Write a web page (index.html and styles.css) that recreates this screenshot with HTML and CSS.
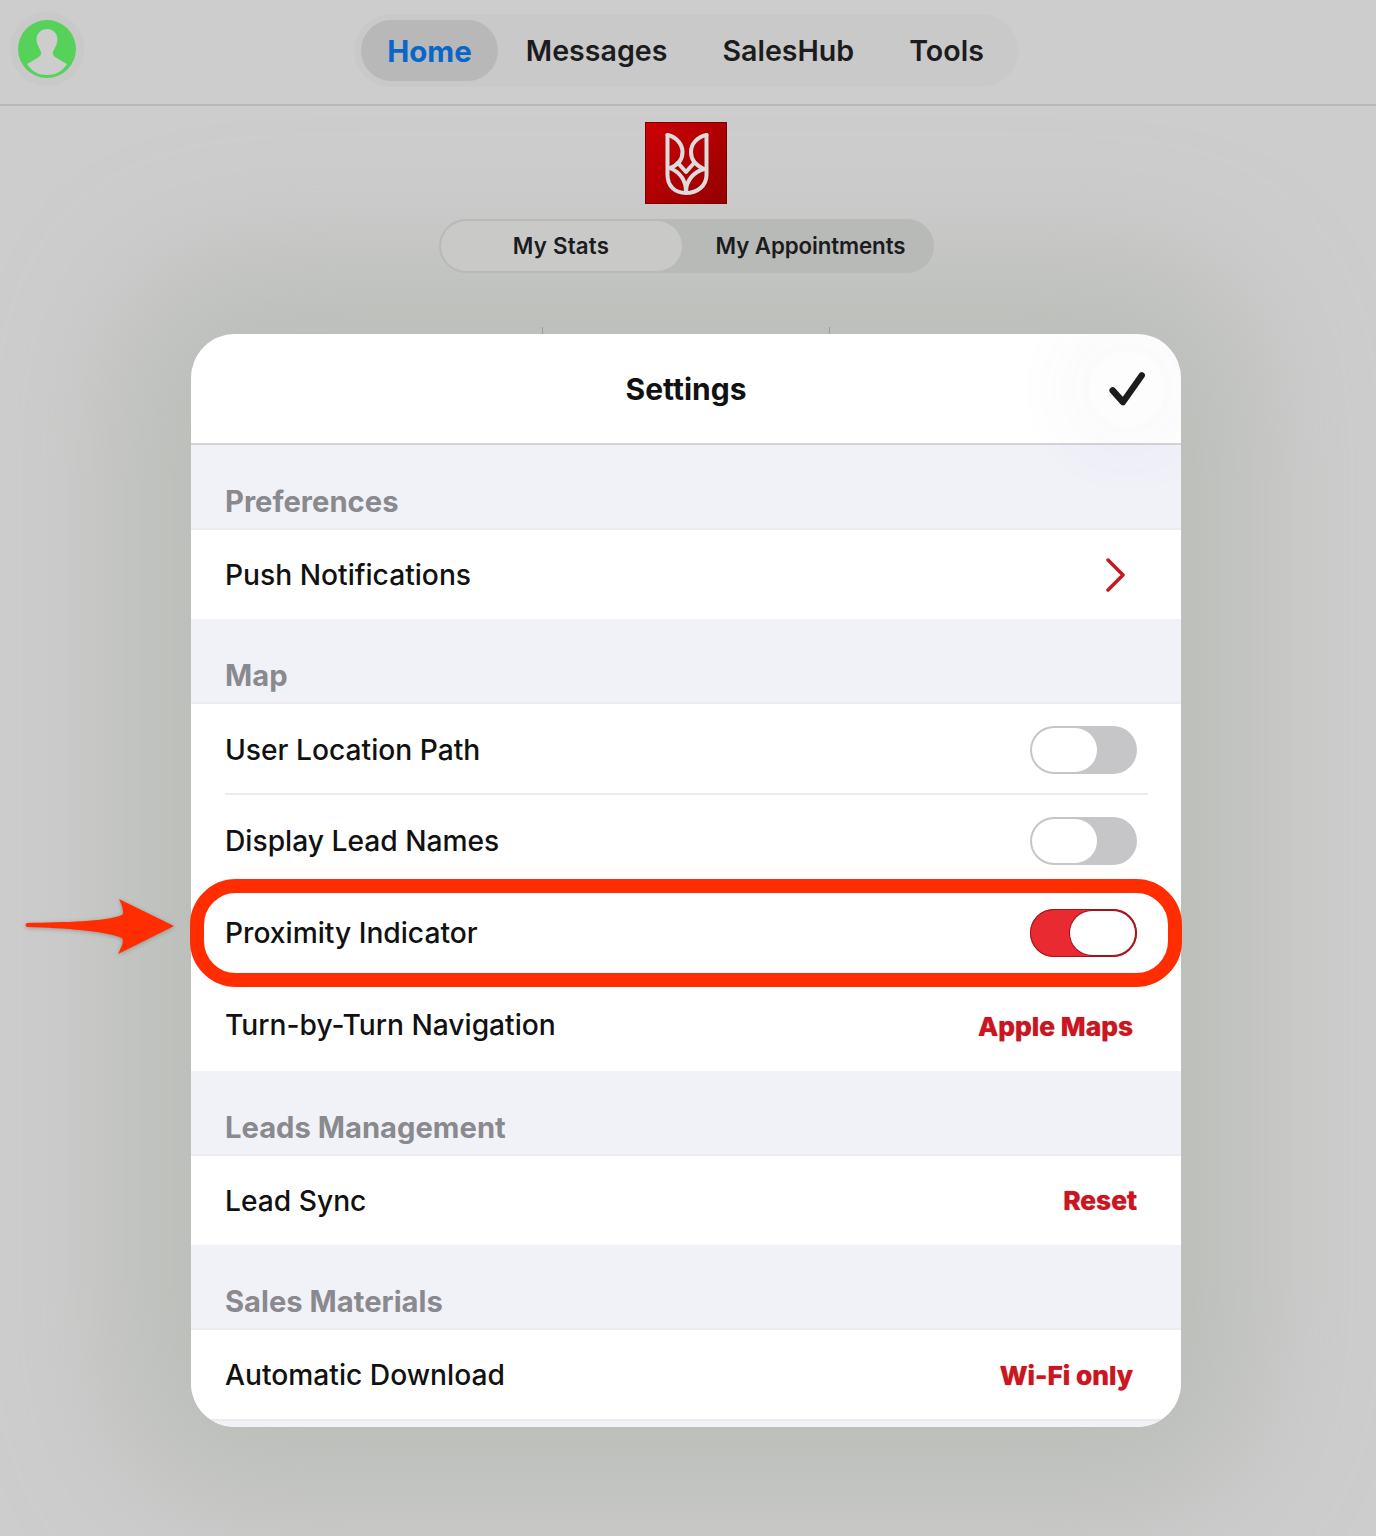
FILE: index.html

```html
<!DOCTYPE html>
<html lang="en">

<head>
    <meta charset="UTF-8">
    <title>Settings</title>
    <link rel="stylesheet" href="styles.css">
</head>

<body>
    <header class="topbar">
        <svg class="avatar" width="74" height="74" viewBox="0 0 74 74">
            <circle cx="37" cy="37" r="37" fill="#c9c9c9" />
            <circle cx="37" cy="37" r="29" fill="#56d25b" />
            <path d="M37 17C43 17 47.500 21.500 47.500 27.500C47.500 32 44.500 36 43 40C42 44 45 45 57 52C52 60 45 63 37 63C29 63 22 60 17 52C29 45 32 44 31 40C29.500 36 26.500 32 26.500 27.500C26.500 21.500 31 17 37 17z" fill="#cdcdcd" />
        </svg>
        <nav class="tabs">
            <a class="tab tab-active">Home</a>
            <a class="tab">Messages</a>
            <a class="tab">SalesHub</a>
            <a class="tab">Tools</a>
        </nav>
    </header>

    <div class="home">
        <svg class="logo" width="82" height="82" viewBox="0 0 82 82">
            <defs>
                <linearGradient id="logored" x1="0" y1="0" x2="1" y2="1">
                    <stop offset="0" stop-color="#d00004" />
                    <stop offset="1" stop-color="#920000" />
                </linearGradient>
            </defs>
            <rect x=".5" y=".5" width="81" height="81" fill="url(#logored)" stroke="#7a0000" />
            <g fill="none" stroke="#dcdcdc" stroke-width="4" stroke-linejoin="round" stroke-linecap="round">
                <path d="M22.500 13V53C22.500 64 30 71 41 71C52 71 61.500 64 61.500 53V13" />
                <path d="M22.500 13C32 15 37.500 23 37.500 30C37.500 37 33 43 25 46" />
                <path d="M61.500 13C52 15 46 22 46 30C46 37 50 43 59 47" />
                <path d="M33 41L41 50L49 41" />
                <path d="M41 70C41 58 34 50 25 46" />
                <path d="M41 70C41 58 49 50 59 47" />
            </g>
        </svg>

        <div class="segments">
            <div class="segment segment-active">My Stats</div>
            <div class="segment segment-next">My Appointments</div>
        </div>

        <div class="ticks"></div>
    </div>

    <main class="modal">
        <div class="modal-clip">
            <div class="modal-head">
                <h1 class="modal-title">Settings</h1>
                <button class="done">
                    <svg width="40" height="40" viewBox="0 0 40 40">
                        <path d="M5.700 21.500L16 33L34.700 6.500" fill="none" stroke="#1c1c1e" stroke-width="6.500" stroke-linecap="round" stroke-linejoin="round" />
                    </svg>
                </button>
            </div>

            <h2 class="section">Preferences</h2>
            <div class="group">
                <div class="row">
                    <span>Push Notifications</span>
                    <svg class="chevron" width="22" height="34" viewBox="0 0 22 34">
                        <path d="M3 2L18 17L3 32" fill="none" stroke="#c8181f" stroke-width="3.500" stroke-linecap="round" stroke-linejoin="round" />
                    </svg>
                </div>
            </div>

            <h2 class="section">Map</h2>
            <div class="group">
                <div class="row row-line">
                    <span>User Location Path</span>
                    <div class="toggle"><div class="knob"></div></div>
                </div>
                <div class="row">
                    <span>Display Lead Names</span>
                    <div class="toggle"><div class="knob"></div></div>
                </div>
                <div class="row">
                    <span>Proximity Indicator</span>
                    <div class="toggle toggle-on"><div class="knob"></div></div>
                </div>
                <div class="row">
                    <span>Turn-by-Turn Navigation</span>
                    <span class="value value-inset">Apple Maps</span>
                </div>
            </div>

            <h2 class="section">Leads Management</h2>
            <div class="group">
                <div class="row">
                    <span>Lead Sync</span>
                    <span class="value">Reset</span>
                </div>
            </div>

            <h2 class="section">Sales Materials</h2>
            <div class="group">
                <div class="row">
                    <span>Automatic Download</span>
                    <span class="value value-inset">Wi-Fi only</span>
                </div>
            </div>
            <div class="modal-foot"></div>
        </div>

        <!-- annotation drawn on top of the screenshot -->
        <div class="highlight"></div>
        <svg class="arrow" width="150" height="60" viewBox="0 0 150 60">
            <path d="M2 26C40 25 80 25 97 18C99 17 98 10 94 2L149 29L93 57C97 49 99 44 97 41C80 34 40 31 2 30C0 29 0 27 2 26z" fill="#ff2d00" />
        </svg>
    </main>
</body>

</html>
```

FILE: styles.css

```css
* {
    box-sizing: border-box;
}

body {
    margin: 0;
    height: 1536px;
    overflow: hidden;
    background: #cdcdcd;
    color: #111;
    font-family: Inter, "Liberation Sans", sans-serif;
}

.topbar {
    position: relative;
    height: 106px;
    display: flex;
    justify-content: center;
    align-items: flex-start;
    padding: 14px 4px 0 0;
    border-bottom: 2px solid #b8b8b8;
}

.avatar {
    position: absolute;
    left: 10px;
    top: 12px;
}

.tabs {
    height: 73px;
    display: flex;
    align-items: center;
    padding: 0 7px;
    border-radius: 37px;
    background: #c9c9c9;
}

.tab {
    height: 61px;
    padding: 0 27.500px;
    display: flex;
    align-items: center;
    border-radius: 31px;
    font-size: 28.600px;
    font-weight: 600;
    color: #1c1c1e;
}

.tab-active {
    padding: 0 26.500px;
    background: #b8b8b8;
    color: #0a66c8;
    font-size: 29.500px;
    font-weight: 700;
}

.home {
    position: relative;
    z-index: 1;
    width: 1372px;
}

.logo {
    display: block;
    margin: 16px auto 0;
}

.segments {
    width: 495px;
    height: 54px;
    margin: 15px auto 0;
    display: flex;
    border-radius: 27px;
    background: #b8bab7;
    padding: 2px;
}

.segment {
    flex: 1;
    display: flex;
    align-items: center;
    justify-content: center;
    padding-bottom: 2px;
    font-size: 22.300px;
    font-weight: 600;
    color: #1c1c1e;
}

.segment-active {
    flex: 0 0 241px;
    border-radius: 25px;
    background: #c9cac8;
    letter-spacing: .2px;
}

.segment-next {
    padding-left: 8px;
    letter-spacing: -.1px;
}

.ticks {
    width: 288px;
    height: 7px;
    margin: 54px auto 0;
    border-left: 1px solid #9c9c9c;
    border-right: 1px solid #9c9c9c;
}

.modal {
    position: relative;
    width: 990px;
    margin: 0 0 0 191px;
    border-radius: 44px;
    box-shadow: 0 0 140px 70px #babdb8;
}

.modal-clip {
    overflow: hidden;
    border-radius: 44px;
    background: #fff;
}

.modal-head {
    height: 111px;
    display: grid;
    grid-template-columns: 1fr auto 1fr;
    align-items: center;
    padding: 0 16px;
    border-bottom: 2px solid #d4d4d6;
}

.modal-title {
    grid-column: 2;
    margin: 0;
    font-size: 30px;
    font-weight: 700;
    color: #111;
}

.done {
    grid-column: 3;
    justify-self: end;
    position: relative;
    z-index: 1;
    width: 76px;
    height: 76px;
    display: flex;
    align-items: center;
    justify-content: center;
    padding: 0;
    border: none;
    border-radius: 50%;
    background: #fdfdfd;
    box-shadow: 0 0 60px 34px rgba(90, 80, 170, .03);
}

.section {
    height: 85px;
    margin: 0;
    padding: 39px 0 0 34px;
    background: #f1f2f8;
    font-size: 29.200px;
    line-height: 36px;
    font-weight: 700;
    color: #8a8a8e;
    border-bottom: 2px solid #ebebf0;
}

.group {
    background: #fff;
}

.row {
    position: relative;
    height: 89px;
    display: flex;
    align-items: center;
    justify-content: space-between;
    padding: 0 44px 0 34px;
    font-size: 28.200px;
    font-weight: 500;
    color: #111;
}

.row-line {
    height: 91px;
}

.row-line::after {
    content: "";
    position: absolute;
    left: 34px;
    right: 33px;
    bottom: 0;
    height: 2px;
    background: #ebebf0;
}

.group .row + .row {
    height: 92px;
}

.chevron {
    margin-right: 10px;
}

.value {
    font-size: 26.300px;
    font-weight: 800;
    color: #cc1520;
    text-shadow: 0 0 1px rgba(120, 0, 0, .6);
}

.value-inset {
    margin: 2px 4px 0 0;
}

.toggle {
    width: 107px;
    height: 48px;
    padding: 2px;
    border-radius: 24px;
    background: #c6c6c8;
}

.knob {
    width: 65px;
    height: 44px;
    border-radius: 22px;
    background: #fff;
}

.toggle-on {
    display: flex;
    justify-content: flex-end;
    background: #e92a30;
    box-shadow: inset 0 0 0 1px #a0141a;
}

.toggle-on .knob {
    box-shadow: 0 0 0 1px #a0141a;
}

.modal-foot {
    height: 8px;
    background: #f1f2f8;
    border-top: 2px solid #ebebf0;
}

.highlight {
    position: absolute;
    left: -1px;
    right: -1px;
    top: 545px;
    height: 108px;
    border: 14px solid #ff2d00;
    border-radius: 46px;
}

.arrow {
    position: absolute;
    left: -166px;
    top: 563px;
    filter: drop-shadow(0 1px 2px rgba(0, 0, 0, .25));
}
```
